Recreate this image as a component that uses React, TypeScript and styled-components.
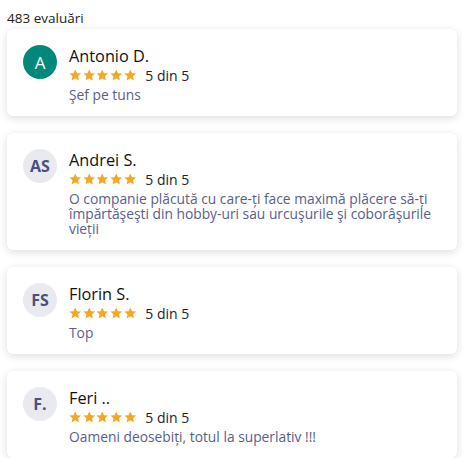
import React from 'react';
import styled, { createGlobalStyle } from 'styled-components';

const GlobalStyle = createGlobalStyle`
    body {
        margin: 0;
        background: #fff;
        font-family: "Open Sans", "Liberation Sans", sans-serif;
    }
`

const Page = styled.div`
    padding: 10px 6px 0 7px;
    width: 450px;
`

const Count = styled.div`
    font-size: 13.5px;
    line-height: 16px;
    color: #222;
    margin-bottom: 3px;
`

const List = styled.div`
    display: flex;
    flex-direction: column;
    gap: 17px;
`

const Card = styled.div`
    display: flex;
    gap: 12px;
    align-items: flex-start;
    background: #fff;
    border-radius: 6px;
    box-shadow: 0 2px 8px rgba(0, 0, 0, 0.14);
    padding: 17px 16px 14px 16px;
`

const Avatar = styled.div<{ $accent?: boolean }>`
    flex: 0 0 34px;
    width: 34px;
    height: 34px;
    margin-top: -1px;
    border-radius: 50%;
    display: flex;
    align-items: center;
    justify-content: center;
    background: ${p => (p.$accent ? '#00897b' : '#e8eaf0')};
    color: ${p => (p.$accent ? '#fff' : '#4b4f7e')};
    font-size: ${p => (p.$accent ? '17px' : '16px')};
    font-weight: ${p => (p.$accent ? 400 : 700)};
`

const Body = styled.div`
    display: flex;
    flex-direction: column;
    min-width: 0;
`

const Name = styled.div`
    font-size: 16.3px;
    line-height: 20px;
    color: #111;
`

const RatingRow = styled.div`
    display: flex;
    align-items: center;
    gap: 9px;
    height: 18px;
    font-size: 14px;
    color: #222;
`

const Stars = styled.div`
    display: flex;
    gap: 1.2px;
`

const Comment = styled.div`
    font-size: 13.8px;
    line-height: 15px;
    color: #5a5e8c;
    margin-top: 3px;
`

const Star = () => (
    <svg width="12.5" height="12" viewBox="0 0 24 23">
        <path fill="#f6a623" d="M12 0.8l3.3 7.2 7.9.8-5.9 5.3 1.7 7.8L12 17.9l-7 4 1.7-7.8L.8 8.8l7.9-.8z" />
    </svg>
)

interface Review {
    initials: string
    name: string
    comment: string
    accent?: boolean
}

const reviews: Review[] = [
    { initials: 'A', name: 'Antonio D.', comment: 'Şef pe tuns', accent: true },
    {
        initials: 'AS',
        name: 'Andrei S.',
        comment: 'O companie plăcută cu care-ți face maximă plăcere să-ți împărtăşeşti din hobby-uri sau urcuşurile şi coborâşurile vieții',
    },
    { initials: 'FS', name: 'Florin S.', comment: 'Top' },
    { initials: 'F.', name: 'Feri ..', comment: 'Oameni deosebiți, totul la superlativ !!!' },
]

export default function App() {
    return (
        <Page>
            <GlobalStyle />
            <Count>483 evaluări</Count>
            <List>
                {reviews.map((r) => (
                    <Card key={r.name}>
                        <Avatar $accent={r.accent}>{r.initials}</Avatar>
                        <Body>
                            <Name>{r.name}</Name>
                            <RatingRow>
                                <Stars>
                                    {[0, 1, 2, 3, 4].map(i => <Star key={i} />)}
                                </Stars>
                                <span>5 din 5</span>
                            </RatingRow>
                            <Comment>{r.comment}</Comment>
                        </Body>
                    </Card>
                ))}
            </List>
        </Page>
    )
}
